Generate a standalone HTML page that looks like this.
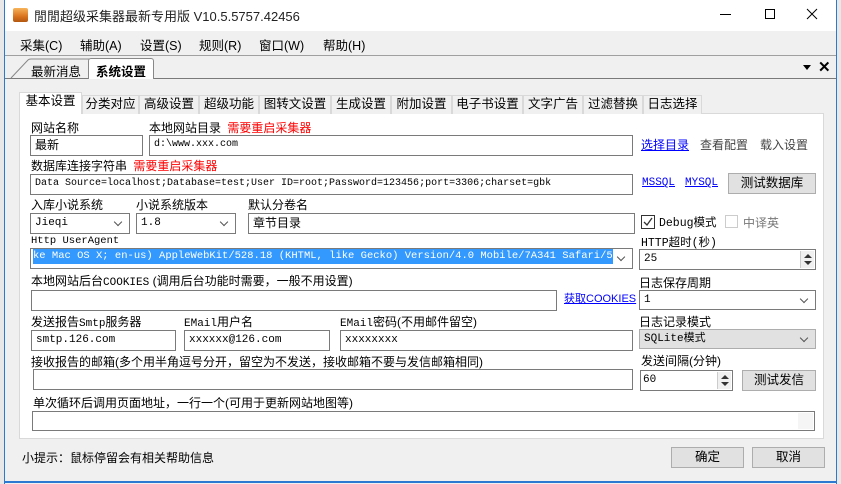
<!DOCTYPE html>
<html><head><meta charset="utf-8"><style>
*{margin:0;padding:0;box-sizing:border-box}
body{width:841px;height:484px;overflow:hidden;background:#f0f0f0;position:relative;font-family:"Liberation Sans","Noto Sans CJK SC",sans-serif;font-size:12px;color:#000}
.a{position:absolute;white-space:nowrap}
.in{position:absolute;background:#fff;border:1px solid #7a7a7a;font-family:"Liberation Mono","Noto Sans CJK SC",monospace;font-size:10px;padding-left:4px;line-height:18px;overflow:hidden;white-space:nowrap}
.sel:after{content:"";position:absolute;right:8px;top:5px;width:5px;height:5px;border-right:1px solid #555;border-bottom:1px solid #555;transform:rotate(45deg)}
.btn{position:absolute;background:#e1e1e1;border:1px solid #adadad;text-align:center}
.red{color:#f00}
.lnk{color:#00f;text-decoration:underline}
.m{font-family:"Liberation Mono","Noto Sans CJK SC",monospace;font-size:11px}
.tab{position:absolute;top:95px;height:19px;border:1px solid #d9d9d9;border-bottom:none;background:#f0f0f0;text-align:center;line-height:17px;font-size:12.5px}
.spin{position:absolute;right:1px;top:1px;width:14px;bottom:1px;background:#f0f0f0;border-left:1px solid #ccc}
.spin:before{content:"";position:absolute;left:3px;top:3px;border:4px solid transparent;border-bottom:4px solid #333;border-top:none}
.spin:after{content:"";position:absolute;left:3px;bottom:3px;border:4px solid transparent;border-top:4px solid #333;border-bottom:none}
</style></head><body>
<div class="a" style="left:0;top:0;width:841px;height:31px;background:#fff"></div>
<div class="a" style="left:0;top:0;width:4px;height:484px;background:#e8e8e8"></div>
<div class="a" style="left:4px;top:0;width:1px;height:484px;background:#2b79d0"></div>
<div class="a" style="left:836px;top:0;width:1px;height:484px;background:#2b79d0"></div>
<div class="a" style="left:837px;top:0;width:4px;height:484px;background:#e8e8e8"></div>
<div class="a" style="left:4px;top:481px;width:833px;height:2px;background:#2b79d0"></div>
<div class="a" style="left:13px;top:8px;width:15px;height:14px;background:linear-gradient(#f7b35a,#d9741d 60%,#b25710);border-radius:2px"></div>
<div class="a" style="left:34px;top:6px;font-size:13px;color:#222">閒閒超级采集器最新专用版 V10.5.5757.42456</div>
<div class="a" style="left:720px;top:14px;width:11px;height:1px;background:#000"></div>
<div class="a" style="left:765px;top:9px;width:10px;height:10px;border:1px solid #000"></div>
<svg class="a" style="left:806px;top:8px" width="12" height="12"><path d="M1 1L11 11M11 1L1 11" stroke="#000" stroke-width="1"/></svg>
<div class="a" style="left:20px;top:35px;font-size:12.5px">采集(C)</div>
<div class="a" style="left:80px;top:35px;font-size:12.5px">辅助(A)</div>
<div class="a" style="left:140px;top:35px;font-size:12.5px">设置(S)</div>
<div class="a" style="left:199px;top:35px;font-size:12.5px">规则(R)</div>
<div class="a" style="left:259px;top:35px;font-size:12.5px">窗口(W)</div>
<div class="a" style="left:323px;top:35px;font-size:12.5px">帮助(H)</div>
<div class="a" style="left:5px;top:55px;width:831px;height:1px;background:#a0a0a0"></div>
<div class="a" style="left:5px;top:78px;width:831px;height:1px;background:#7a7a7a"></div>
<svg class="a" style="left:10px;top:58px" width="80" height="21"><path d="M1 20L18 2Q19 1 21 1L84 1L86 3L86 20" fill="#f0f0f0" stroke="#888"/></svg>
<div class="a" style="left:31px;top:61px;font-size:12.5px">最新消息</div>
<div class="a" style="left:88px;top:58px;width:66px;height:21px;background:#fff;border:1px solid #888;border-bottom:none;border-radius:3px 3px 0 0"></div>
<div class="a" style="left:96px;top:61px;font-size:12.5px;font-weight:bold">系统设置</div>
<div class="a" style="left:803px;top:65px;border:4px solid transparent;border-top:5px solid #000"></div>
<div class="a" style="left:818px;top:58px;font-size:15px;font-weight:bold">✕</div>
<div class="a" style="left:19px;top:113px;width:805px;height:326px;background:#fff;border:1px solid #d9d9d9"></div>
<div class="tab" style="left:19px;top:92px;height:22px;width:63px;background:#fff;z-index:2">基本设置</div>
<div class="tab" style="left:82px;width:57px">分类对应</div>
<div class="tab" style="left:139px;width:60px">高级设置</div>
<div class="tab" style="left:199px;width:60px">超级功能</div>
<div class="tab" style="left:259px;width:72px">图转文设置</div>
<div class="tab" style="left:331px;width:60px">生成设置</div>
<div class="tab" style="left:391px;width:61px">附加设置</div>
<div class="tab" style="left:452px;width:71px">电子书设置</div>
<div class="tab" style="left:523px;width:60px">文字广告</div>
<div class="tab" style="left:583px;width:60px">过滤替换</div>
<div class="tab" style="left:643px;width:59px">日志选择</div>

<div class="a" style="left:31px;top:119px">网站名称</div>
<div class="a" style="left:149px;top:119px">本地网站目录 <span class="red" style="margin-left:3px">需要重启采集器</span></div>
<div class="in" style="left:30px;top:135px;width:113px;height:21px;font-family:'Liberation Sans','Noto Sans CJK SC';font-size:12px">最新</div>
<div class="in" style="left:149px;top:135px;width:484px;height:21px">d:\www.xxx.com</div>
<div class="a lnk" style="left:641px;top:136px">选择目录</div>
<div class="a" style="left:700px;top:136px;color:#444">查看配置</div>
<div class="a" style="left:760px;top:136px;color:#444">载入设置</div>

<div class="a" style="left:31px;top:157px">数据库连接字符串 <span class="red" style="margin-left:3px">需要重启采集器</span></div>
<div class="in" style="left:30px;top:174px;width:603px;height:21px">Data Source=localhost;Database=test;User ID=root;Password=123456;port=3306;charset=gbk</div>
<div class="a lnk m" style="left:642px;top:177px">MSSQL</div>
<div class="a lnk m" style="left:685px;top:177px">MYSQL</div>
<div class="btn" style="left:728px;top:173px;width:88px;height:21px;line-height:19px;font-size:12.5px">测试数据库</div>

<div class="a" style="left:31px;top:196px">入库小说系统</div>
<div class="a" style="left:136px;top:196px">小说系统版本</div>
<div class="a" style="left:248px;top:196px">默认分卷名</div>
<div class="in sel" style="left:30px;top:213px;width:100px;height:21px;font-size:11px">Jieqi</div>
<div class="in sel" style="left:136px;top:213px;width:100px;height:21px;font-size:11px">1.8</div>
<div class="in" style="left:248px;top:213px;width:387px;height:21px;font-family:'Liberation Sans','Noto Sans CJK SC';font-size:12px">章节目录</div>
<div class="a" style="left:641px;top:215px;width:14px;height:14px;border:1px solid #333;background:#fff"></div>
<svg class="a" style="left:642px;top:216px" width="12" height="12"><path d="M2 6L5 9L10 2" stroke="#333" stroke-width="1.3" fill="none"/></svg>
<div class="a m" style="left:659px;top:214px;font-size:11.5px">Debug模式</div>
<div class="a" style="left:725px;top:215px;width:13px;height:13px;border:1px solid #ccc;background:#fff"></div>
<div class="a" style="left:743px;top:214px;color:#777">中译英</div>

<div class="a m" style="left:31px;top:235px;font-size:10.5px">Http UserAgent</div>
<div class="a m" style="left:641px;top:234px;font-size:11.5px">HTTP超时(秒)</div>
<div class="in sel" style="left:30px;top:248px;width:603px;height:21px;padding-left:2px"><span style="background:#3399ff;color:#fff;display:inline-block;width:580px;overflow:hidden;font-size:10.5px;line-height:15px">ke Mac OS X; en-us) AppleWebKit/528.18 (KHTML, like Gecko) Version/4.0 Mobile/7A341 Safari/528.16</span></div>
<div class="in" style="left:639px;top:249px;width:177px;height:21px;font-size:11px">25<div class="spin"></div></div>

<div class="a" style="left:31px;top:272px">本地网站后台<span class="m">COOKIES</span> (调用后台功能时需要，一般不用设置)</div>
<div class="a" style="left:639px;top:274px">日志保存周期</div>
<div class="in" style="left:31px;top:290px;width:526px;height:21px"></div>
<div class="a lnk" style="left:564px;top:290px;font-size:11px">获取COOKIES</div>
<div class="in sel" style="left:639px;top:290px;width:177px;height:20px;font-size:11px">1</div>

<div class="a" style="left:31px;top:313px">发送报告<span class="m">Smtp</span>服务器</div>
<div class="a" style="left:184px;top:313px"><span class="m">EMail</span>用户名</div>
<div class="a" style="left:340px;top:313px"><span class="m">EMail</span>密码(不用邮件留空)</div>
<div class="a" style="left:639px;top:313px">日志记录模式</div>
<div class="in" style="left:31px;top:330px;width:145px;height:21px;font-size:11px">smtp.126.com</div>
<div class="in" style="left:184px;top:330px;width:146px;height:21px;font-size:11px">xxxxxx@126.com</div>
<div class="in" style="left:340px;top:330px;width:293px;height:21px;font-size:11px">xxxxxxxx</div>
<div class="in sel" style="left:639px;top:329px;width:177px;height:20px;background:#e1e1e1;border-color:#adadad;font-size:11px">SQLite模式</div>

<div class="a" style="left:31px;top:353px">接收报告的邮箱(多个用半角逗号分开，留空为不发送，接收邮箱不要与发信邮箱相同)</div>
<div class="a" style="left:641px;top:352px">发送间隔(分钟)</div>
<div class="in" style="left:33px;top:369px;width:600px;height:21px"></div>
<div class="in" style="left:640px;top:370px;width:93px;height:21px;padding-left:2px;font-size:11px">60<div class="spin"></div></div>
<div class="btn" style="left:742px;top:370px;width:74px;height:21px;line-height:19px;font-size:12.5px">测试发信</div>

<div class="a" style="left:33px;top:394px">单次循环后调用页面地址，一行一个(可用于更新网站地图等)</div>
<div class="in" style="left:32px;top:411px;width:783px;height:20px"><div style="position:absolute;right:1px;top:1px;width:15px;bottom:1px;background:#f5f5f5"></div></div>

<div class="a" style="left:22px;top:449px">小提示：鼠标停留会有相关帮助信息</div>
<div class="btn" style="left:671px;top:447px;width:73px;height:21px;line-height:19px;font-size:12.5px">确定</div>
<div class="btn" style="left:752px;top:447px;width:73px;height:21px;line-height:19px;font-size:12.5px">取消</div>
</body></html>
